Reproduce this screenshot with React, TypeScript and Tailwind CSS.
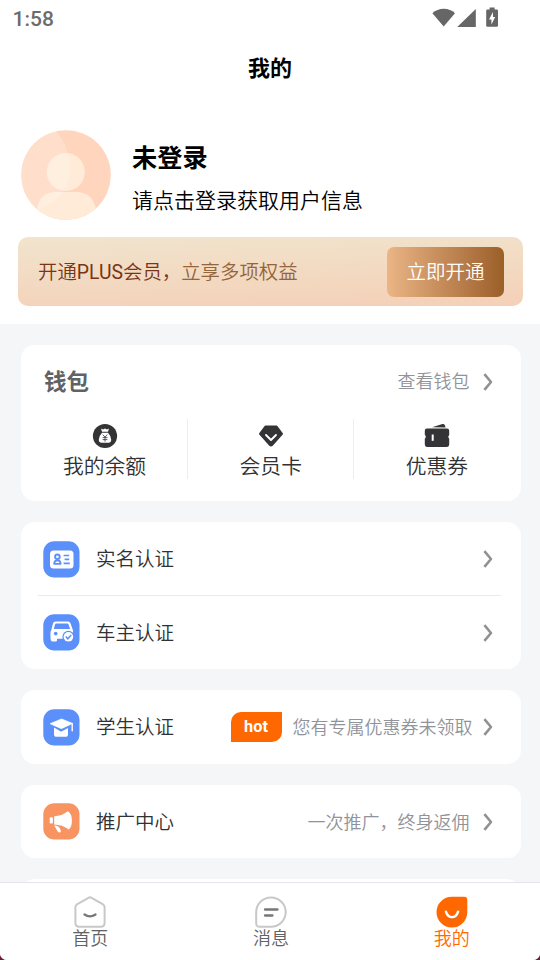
import React from 'react'

// ================================
// INTERFACES & TYPES
// ================================

interface MenuRowProps {
  icon: React.ReactNode
  label: string
  hint?: string
  hintClass?: string
  hot?: boolean
}

interface TabItemProps {
  icon: React.ReactNode
  label: string
  active?: boolean
}

// ================================
// ICONS
// ================================

const StatusIcons = () => (
  <svg className="h-[22px] w-[68px]" viewBox="432 7 68 22" fill="#666">
    <path d="M432.4 13.2C438 7.2 449.6 7.2 455 13.2L443.7 26.6Z" />
    <path d="M475.8 9V27H457.2Z" />
    <path
      fillRule="evenodd"
      d="M489.6 7.6h5v2h2.2q1.2 0 1.2 1.2v14.8q0 1.2-1.2 1.2h-9.4q-1.2 0-1.2-1.2V10.8q0-1.2 1.2-1.2h2.2ZM493 12l-4 7.4h2.4v5l3.8-7.4h-2.2Z"
    />
  </svg>
)

const Avatar = () => (
  <svg className="size-[90px] shrink-0" viewBox="0 0 90 90">
    <defs>
      <clipPath id="avatar-clip">
        <circle cx="45" cy="45" r="44.8" />
      </clipPath>
    </defs>
    <g clipPath="url(#avatar-clip)">
      <rect width="90" height="90" fill="#ffd6bd" />
      <circle cx="44.8" cy="42" r="19" fill="#ffebd7" />
      <path d="M16 90V80Q18 62 35 62H55Q72 62 75 80V90Z" fill="#ffebd7" />
      <path d="M0 0H34Q49 16 49 42Q46 70 17 79L0 90Z" fill="#fff" opacity="0.22" />
    </g>
  </svg>
)

const Chevron = () => (
  <svg className="h-[18px] w-[10px] shrink-0" viewBox="0 0 10 18" fill="none" stroke="#909193" strokeWidth="2.6">
    <path d="M1.4 1.2L8 9L1.4 16.8" strokeLinejoin="round" />
  </svg>
)

const BalanceIcon = () => (
  <svg className="size-[26px] shrink-0" viewBox="0 0 26 26">
    <circle cx="13" cy="13" r="12.1" fill="#343436" />
    <path d="M9 5.6l2 .8 2-.8 2 .8 2-.8-1 3.2H10Z" fill="#fff" />
    <path d="M10 9.8h6q3.2 3.4 3.2 7 0 3-2.8 3H9.6q-2.8 0-2.8-3 0-3.6 3.2-7Z" fill="#fff" />
    <path d="M10.8 11.6L13 14.2l2.2-2.6M13 14.2v4.4M10.6 14.6h4.8M10.6 16.6h4.8" stroke="#343436" fill="none" strokeWidth=".8" />
  </svg>
)

const MemberIcon = () => (
  <svg className="size-[26px] shrink-0" viewBox="0 0 26 26">
    <path d="M7.4 3.5H18.6L24 10.8 14 22Q13 23 12 22L2 10.8Z" fill="#343436" stroke="#343436" strokeWidth="2" strokeLinejoin="round" />
    <path d="M8 12l5 5 5-5" fill="none" stroke="#fff" strokeWidth="1.9" strokeLinecap="round" strokeLinejoin="round" />
  </svg>
)

const CouponIcon = () => (
  <svg className="size-[26px] shrink-0" viewBox="0 0 26 26">
    <path d="M8 4.3L18.5 1Q20.2.6 20.8 2.2L21.6 4.5Z" fill="#343436" />
    <path d="M3 5.6H23Q25.2 5.6 25.2 7.8V11.8Q23.4 13.8 25.2 15.8V21.6Q25.2 23.9 23 23.9H3Q.8 23.9.8 21.6V15.8Q2.8 13.8.8 11.8V7.8Q.8 5.6 3 5.6Z" fill="#343436" />
    <path d="M8.7 11.5V17.8" stroke="#fff" strokeWidth="2" />
  </svg>
)

const IdCardIcon = () => (
  <svg className="size-[37px]" viewBox="0 0 37 37">
    <rect x=".3" y=".3" width="36.2" height="36.2" rx="11" fill="#5b8ff9" />
    <rect x="7" y="9.5" width="23.5" height="18" rx="3.5" fill="#fff" />
    <circle cx="14.4" cy="15.8" r="2.3" fill="none" stroke="#5b8ff9" strokeWidth="1.9" />
    <path d="M11.2 22.8q0-3.4 3.2-3.4t3.2 3.4Z" fill="none" stroke="#5b8ff9" strokeWidth="1.8" strokeLinejoin="round" />
    <path d="M20.6 14.5h5.6M21.6 18.4h4.6M20.6 22.4h6.2" stroke="#5b8ff9" strokeWidth="1.6" />
  </svg>
)

const CarIcon = () => (
  <svg className="size-[37px]" viewBox="0 0 37 37">
    <rect x=".3" y=".3" width="36.2" height="36.2" rx="11" fill="#5b8ff9" />
    <path
      fillRule="evenodd"
      d="M12.6 7.6H25Q27 7.6 27.6 9.5L30 16.5V21H8V26.5Q7.7 25 7.7 21.5V18.2L10 9.5Q10.5 7.6 12.6 7.6ZM13.2 9.6Q12.3 9.6 12 10.6L10.8 15H27L25.6 10.6Q25.2 9.6 24.2 9.6Z"
      fill="#fff"
    />
    <path d="M7.7 17H30V24.8H14V26.2Q14 27.6 12.6 27.6H10.4Q7.7 27.6 7.7 25Z" fill="#fff" />
    <circle cx="12.7" cy="19.6" r="1.8" fill="#5b8ff9" />
    <circle cx="25.4" cy="22.8" r="6" fill="#5b8ff9" />
    <circle cx="25.4" cy="22.8" r="4.8" fill="#fff" />
    <path d="M22.8 22.6l2 2.2 3.4-3.8" fill="none" stroke="#5b8ff9" strokeWidth="1.5" />
  </svg>
)

const StudentIcon = () => (
  <svg className="size-[37px]" viewBox="0 0 37 37">
    <rect x=".3" y=".3" width="36.2" height="36.2" rx="11" fill="#5b8ff9" />
    <path d="M18.5 10L29.5 14.4 18.8 19.4Q18.3 19.6 17.6 19.3L7.2 14.7Z" fill="#fff" stroke="#fff" strokeWidth=".8" strokeLinejoin="round" />
    <path d="M29.2 14.6V21.8" stroke="#fff" strokeWidth="1.4" strokeLinecap="round" />
    <path d="M11 18.6L17.4 22.2Q18.2 22.6 19 22.2L25 19V25.2Q25 27.8 22.4 27.8H13.6Q11 27.8 11 25.2Z" fill="#fff" />
  </svg>
)

const PromoteIcon = () => (
  <svg className="size-[37px]" viewBox="0 0 37 37">
    <rect x=".3" y=".3" width="36.2" height="36.2" rx="11" fill="#f79462" />
    <rect x="6.7" y="14.2" width="3.2" height="6.4" rx="1.1" fill="#fff" />
    <path d="M11.2 13.2Q19 13 24.8 8.2Q28.9 10.5 28.9 17.4Q28.9 24.2 25.8 26.4Q19.4 21.6 11.2 21.4Z" fill="#fff" />
    <path d="M11.2 22.6Q15.4 22.4 17.2 26Q18.8 29.4 16.6 29.4Q14.8 29.6 13.4 26.6Q12.2 24 11.2 22.6Z" fill="#fff" />
  </svg>
)

const HomeTabIcon = () => (
  <svg className="size-[32px]" viewBox="0 0 32 32" fill="none" strokeLinecap="round">
    <path d="M14.5 1.8Q16 .9 17.5 1.8L28.7 8.2Q30.6 9.3 30.6 11.2V26.8Q30.6 30.8 26.8 30.8H5.2Q1.4 30.8 1.4 26.8V11.2Q1.4 9.3 3.3 8.2Z" stroke="#c8c8c8" strokeWidth="2" />
    <path d="M10.5 18.5Q16 22.2 21.5 18.5" stroke="#777" strokeWidth="2.3" />
  </svg>
)

const MessageTabIcon = () => (
  <svg className="size-[32px]" viewBox="0 0 32 32" fill="none" strokeLinecap="round">
    <path d="M16 1.4A14.6 14.6 0 1 1 16 30.8H4.8Q1.2 30.8 1.2 27.2V16A14.8 14.6 0 0 1 16 1.4Z" stroke="#c8c8c8" strokeWidth="2" />
    <path d="M10 13.5H22.5M10 19.5H17.5" stroke="#777" strokeWidth="2.3" />
  </svg>
)

const MineTabIcon = () => (
  <svg className="size-[32px]" viewBox="0 0 32 32">
    <path d="M16 .7H28.2Q31.3.7 31.3 3.8V16A15.4 15.4 0 1 1 16 .7Z" fill="#ff6700" />
    <path d="M9.9 16.6Q11.6 22.2 16 22.2T22.1 16.6" fill="none" stroke="#cf5200" strokeOpacity=".5" strokeWidth="2.5" strokeLinecap="round" />
    <path d="M9.9 15.7Q11.6 21.3 16 21.3T22.1 15.7" fill="none" stroke="#fff" strokeWidth="2.5" strokeLinecap="round" />
  </svg>
)

// ================================
// SUB COMPONENTS
// ================================

const WalletItem = ({ icon, label }: { icon: React.ReactNode; label: string }) => (
  <div className="flex h-[60px] flex-1 flex-col items-center pt-[4px]">
    {icon}
    <span className="mt-[1px] text-[20.8px] leading-[30px] text-[#303133]">{label}</span>
  </div>
)

const MenuRow: React.FC<MenuRowProps> = ({ icon, label, hint, hintClass = '', hot }) => (
  <div className="flex h-[73.5px] items-center pr-[28px] pl-[22px]">
    {icon}
    <span className="mb-[2px] ml-[16px] text-[19.5px] leading-[28px] text-[#303133]">{label}</span>
    <div className="ml-auto flex items-center">
      {hot && (
        <span className="mr-[11px] flex h-[30px] w-[51px] items-center justify-center rounded-tl-[10px] rounded-br-[10px] bg-[#ff6700] font-['Roboto',sans-serif] text-[16.3px] font-bold text-white">
          hot
        </span>
      )}
      {hint && <span className={`mb-[2px] text-[18px] leading-[26px] text-[#909399] ${hintClass}`}>{hint}</span>}
      <Chevron />
    </div>
  </div>
)

const TabItem: React.FC<TabItemProps> = ({ icon, label, active }) => (
  <div className="flex flex-1 flex-col items-center pt-[13px]">
    {icon}
    <span className={`-mt-[4px] text-[18px] leading-[26px] ${active ? 'text-[#ff6700]' : 'text-[#606266]'}`}>{label}</span>
  </div>
)

// ================================
// MAIN COMPONENT
// ================================

export default function App() {
  return (
    <div className="h-[960px] w-[540px] overflow-hidden bg-[#6b1f34] font-['Noto_Sans_CJK_SC',sans-serif] font-[350]">
      <div className="flex h-full flex-col overflow-hidden rounded-b-[7px] bg-[#f5f6f8]">
        {/* Header and profile */}
        <header className="h-[324px] shrink-0 bg-white">
          <div className="flex h-[36px] items-start justify-between pr-[40px] pl-[12.5px]">
            <span className="pt-[7px] font-['Roboto',sans-serif] text-[21px] leading-[24px] font-medium text-[#6c6c6c]">1:58</span>
            <div className="pt-[7px]">
              <StatusIcons />
            </div>
          </div>
          <h1 className="h-[60px] text-center text-[22px] leading-[60px] font-bold text-black">我的</h1>

          <div className="mt-[34px] flex items-start pl-[21px]">
            <Avatar />
            <div className="ml-[21px] pt-[8px] text-black">
              <p className="text-[25.2px] leading-[36px] font-bold">未登录</p>
              <p className="mt-[10px] text-[21px] leading-[30px]">请点击登录获取用户信息</p>
            </div>
          </div>

          <div className="mt-[17px] mr-[17px] ml-[18px] flex h-[69px] items-center justify-between rounded-[10px] bg-[linear-gradient(178deg,#f1e4cd,#f4d0b7)] pr-[19px] pl-[20px]">
            <p className="text-[19.4px] leading-[28px] text-[#95643a]">
              <span className="text-[#7a3516]">
                开通<span className="font-['Roboto',sans-serif] font-normal">PLUS</span>会员，
              </span>
              立享多项权益
            </p>
            <button className="h-[50px] w-[117px] rounded-[7px] bg-linear-to-r from-[#ebb585] to-[#9b5f28] pb-[2px] text-[19.5px] text-white">
              立即开通
            </button>
          </div>
        </header>

        {/* Cards */}
        <main className="flex min-h-0 flex-1 flex-col gap-[21px] overflow-hidden pt-[21px] pr-[19.5px] pl-[21px]">
          <section className="h-[156.4px] shrink-0 rounded-[14px] bg-white">
            <div className="flex h-[74px] items-center justify-between pr-[28px] pl-[23px]">
              <h2 className="mb-[4px] text-[22.5px] leading-[32px] font-bold text-[#606266]">钱包</h2>
              <div className="flex items-center">
                <span className="mr-[13px] mb-[4px] text-[18px] leading-[26px] text-[#909399]">查看钱包</span>
                <Chevron />
              </div>
            </div>
            <div className="flex divide-x divide-[#ebedf0] px-px">
              <WalletItem icon={<BalanceIcon />} label="我的余额" />
              <WalletItem icon={<MemberIcon />} label="会员卡" />
              <WalletItem icon={<CouponIcon />} label="优惠券" />
            </div>
          </section>

          <section className="shrink-0 rounded-[14px] bg-white">
            <MenuRow icon={<IdCardIcon />} label="实名认证" />
            <div className="-mt-px mr-[20px] ml-[17px] h-px bg-[#e9eaec]" />
            <MenuRow icon={<CarIcon />} label="车主认证" />
          </section>

          <section className="shrink-0 rounded-[14px] bg-white">
            <MenuRow icon={<StudentIcon />} label="学生认证" hint="您有专属优惠券未领取" hintClass="mr-[10px]" hot />
          </section>

          <section className="shrink-0 rounded-[14px] bg-white">
            <MenuRow icon={<PromoteIcon />} label="推广中心" hint="一次推广，终身返佣" hintClass="mr-[13px]" />
          </section>

          <section className="h-[73.5px] shrink-0 rounded-[14px] bg-white" />
        </main>

        {/* Bottom tab bar */}
        <nav className="-mr-[2px] flex h-[78px] shrink-0 border-t border-[#e4e5ea] bg-white">
          <TabItem icon={<HomeTabIcon />} label="首页" />
          <TabItem icon={<MessageTabIcon />} label="消息" />
          <TabItem icon={<MineTabIcon />} label="我的" active />
        </nav>
      </div>
    </div>
  )
}
